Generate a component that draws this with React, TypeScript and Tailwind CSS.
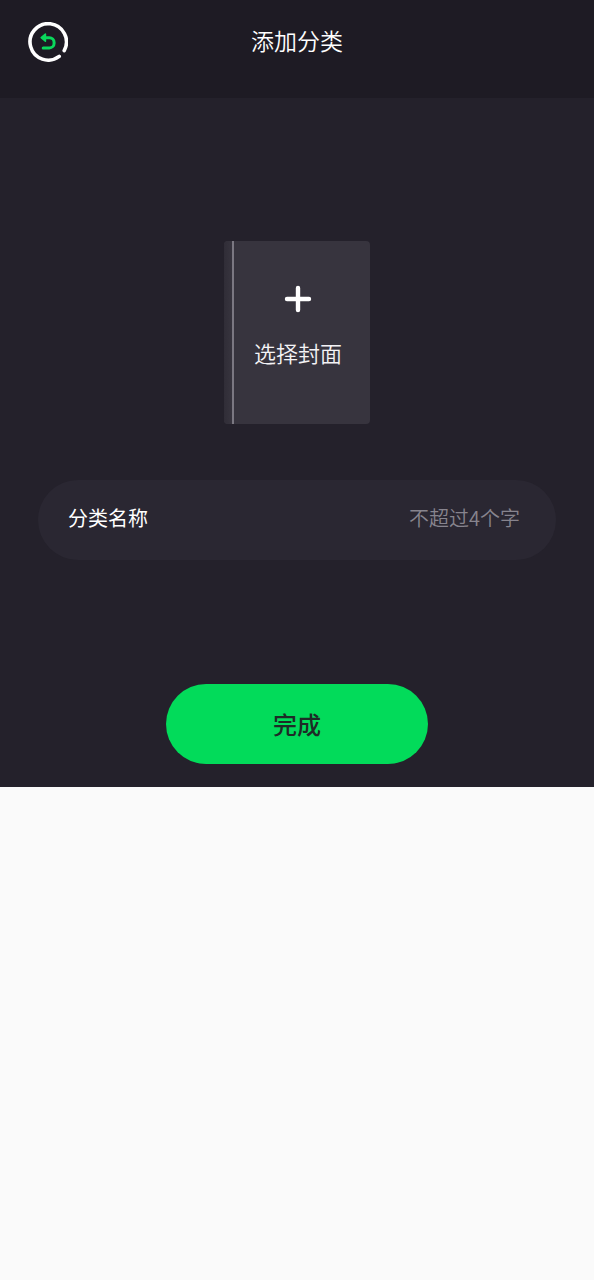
const BackIcon = () => (
  <svg viewBox="0 0 40 40" className="size-10" fill="none" aria-hidden="true">
    <path
      d="M31.2 34.4A18.2 18.2 0 1 1 36.2 28.6"
      stroke="#ffffff"
      strokeWidth="3.6"
      strokeLinecap="round"
    />
    <path
      d="M15.2 15.8H21.4A4.7 4.7 0 0 1 26.1 20.5V21.2A4.7 4.7 0 0 1 21.4 25.9H15.2"
      stroke="#0ad85c"
      strokeWidth="3"
      strokeLinecap="round"
    />
    <path
      d="M17.4 12L13.2 15.6L17.4 19.2Z"
      fill="#0ad85c"
      stroke="#0ad85c"
      strokeWidth="1.6"
      strokeLinejoin="round"
    />
  </svg>
);

const PlusIcon = () => (
  <svg viewBox="0 0 28 28" className="size-7" fill="none" aria-hidden="true">
    <path
      d="M14 3V25M3 14H25"
      stroke="#ffffff"
      strokeWidth="4.4"
      strokeLinecap="round"
    />
  </svg>
);

const Header = () => {
  return (
    <header className="grid grid-cols-[40px_1fr_40px] items-start bg-[#1e1b24] px-7 pt-[22px] pb-9">
      <button type="button" aria-label="返回" className="size-10">
        <BackIcon />
      </button>
      <h1 className="text-center text-[23px] leading-9 font-[350] text-white">
        添加分类
      </h1>
    </header>
  );
};

const CoverPicker = () => {
  return (
    <button
      type="button"
      className="flex h-[183px] w-[146px] overflow-hidden rounded-[4px] bg-[#37343e]"
    >
      <span className="h-full w-2.5 border-r-2 border-[#7b7882] bg-linear-to-r from-[#302d37] to-[#37343e]" />
      <span className="flex h-full flex-1 flex-col items-center pt-11 pr-2">
        <PlusIcon />
        <span className="mt-[23px] text-[22px] leading-8 font-[350] text-[#f4f3f6]">
          选择封面
        </span>
      </span>
    </button>
  );
};

const App = () => {
  return (
    <div className="min-h-screen bg-[#fafafa] font-['Noto_Sans_CJK_SC','Noto_Sans',sans-serif]">
      <div className="bg-[#24212b]">
        <Header />
        <form
          className="flex flex-col items-center px-[38px] pt-[143px] pb-[23px]"
          onSubmit={(e) => e.preventDefault()}
        >
          <CoverPicker />
          <div className="mt-14 flex h-20 w-full items-center rounded-full bg-[#2a2732] pr-9 pl-[30px] text-[20px]">
            <label htmlFor="category" className="shrink-0 pb-1 text-white">
              分类名称
            </label>
            <input
              id="category"
              type="text"
              maxLength={4}
              placeholder="不超过4个字"
              className="min-w-0 flex-1 bg-transparent pb-1 text-right font-[350] text-white outline-none placeholder:text-[#87848e]"
            />
          </div>
          <button
            type="submit"
            className="mt-[124px] h-20 w-[262px] rounded-full bg-[#02db5a] text-[24px] font-medium text-[#1e2b27]"
          >
            完成
          </button>
        </form>
      </div>
    </div>
  );
};

export default App;
